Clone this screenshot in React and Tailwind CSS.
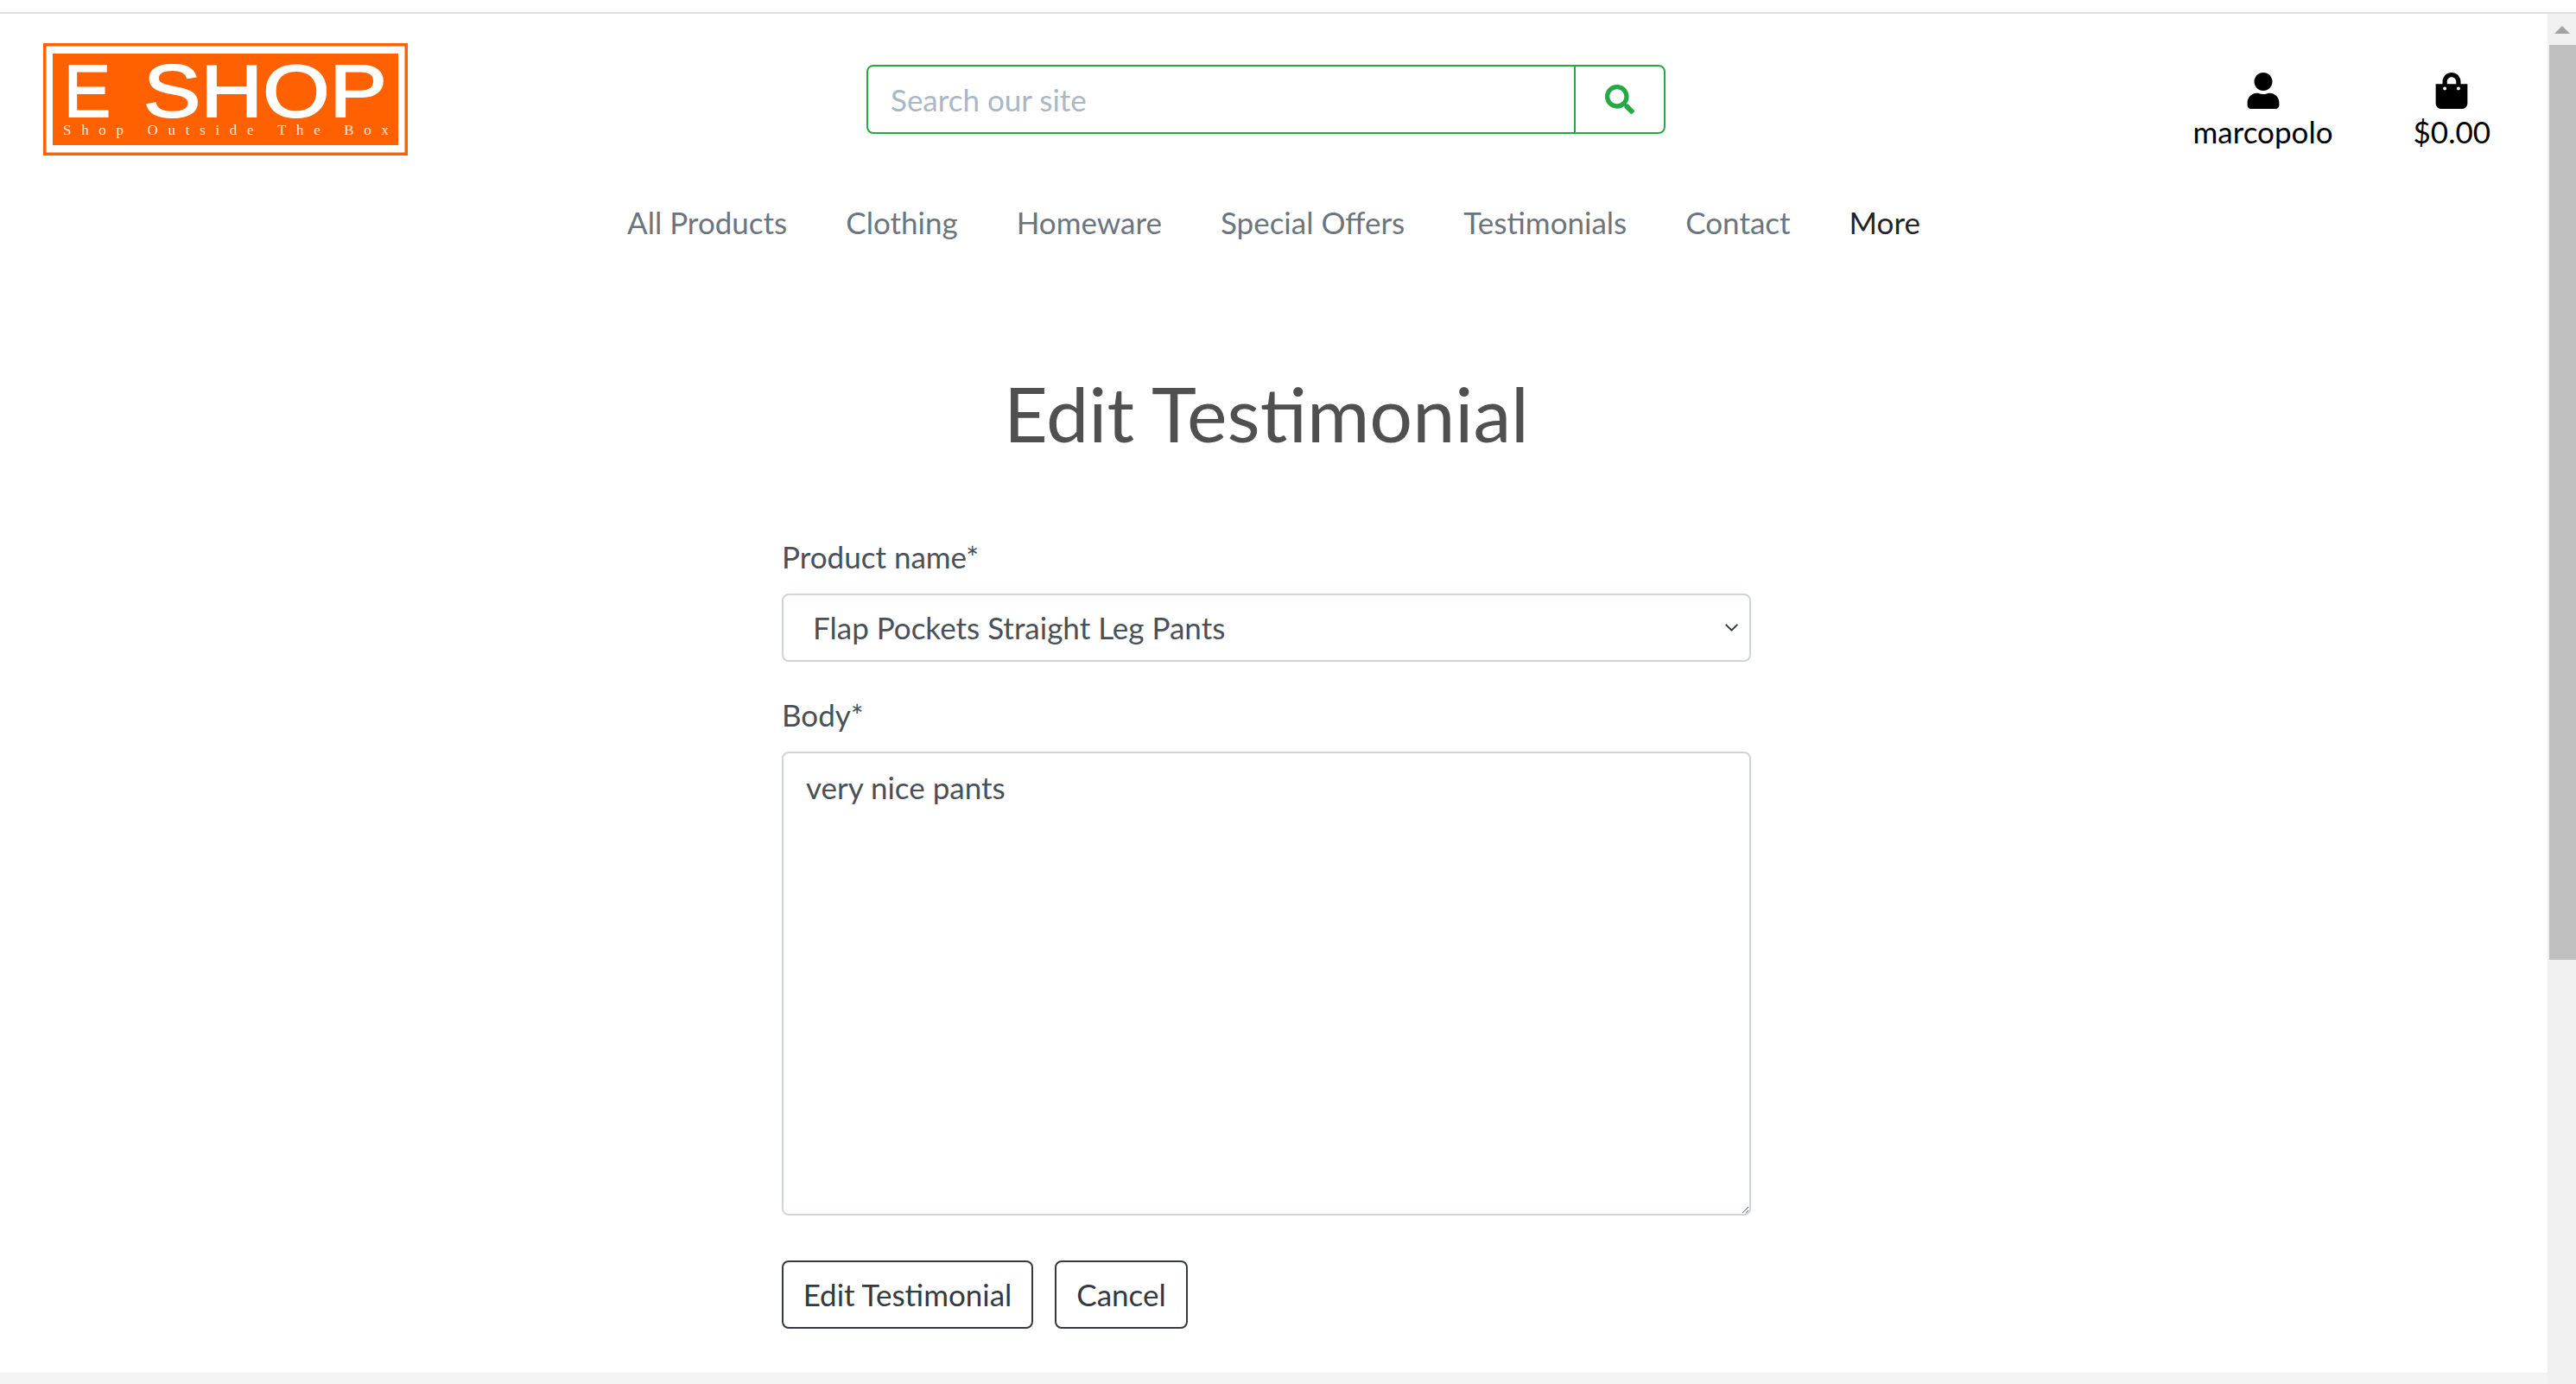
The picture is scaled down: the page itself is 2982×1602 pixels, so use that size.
import { FaSearch, FaShoppingBag, FaUser } from 'react-icons/fa';
import { FiChevronDown } from 'react-icons/fi';

const navLinks = ['All Products', 'Clothing', 'Homeware', 'Special Offers', 'Testimonials', 'Contact'];

const Logo = () => (
  <svg width="422" height="130" viewBox="0 0 422 130" className="block shrink-0">
    <rect x="0" y="0" width="422" height="130" fill="#ff6000" />
    <rect x="3.5" y="3.5" width="415" height="123" fill="#ffffff" />
    <rect x="11" y="12" width="400" height="106" fill="#ff6000" />
    <g fill="#ffffff" stroke="#ffffff" strokeWidth="2" fontFamily="'Liberation Sans', sans-serif" fontSize="86">
      <text x="24" y="85" textLength="54" lengthAdjust="spacingAndGlyphs">E</text>
      <text x="116" y="85" textLength="282" lengthAdjust="spacingAndGlyphs">SHOP</text>
    </g>
    <text
      x="23"
      y="106"
      fill="#ffe6d6"
      fontFamily="'Liberation Serif', serif"
      fontSize="17"
      textLength="377"
    >
      Shop Outside The Box
    </text>
  </svg>
);

const Header = () => (
  <div className="flex items-start pt-[34px] pl-[50px]">
    <Logo />
    <form className="flex h-[80px] w-[925px] ml-[531px] mt-[25px] rounded-lg border-2 border-[#28a745]">
      <input
        className="flex-1 min-w-0 px-[26px] text-[35px] text-[#495057] placeholder:text-[#a9b7c6] outline-none bg-transparent"
        placeholder="Search our site"
      />
      <button type="button" className="flex w-[104px] items-center justify-center border-l-2 border-[#28a745] text-[#28a745]">
        <FaSearch size={34} />
      </button>
    </form>
    <div className="ml-auto mr-[66px] mt-[34px] flex gap-[93px] text-black text-[35px] leading-[42px]">
      <a className="flex flex-col items-center">
        <FaUser size={42} />
        <span className="mt-[5px]">marcopolo</span>
      </a>
      <a className="flex flex-col items-center">
        <FaShoppingBag size={42} />
        <span className="mt-[5px]">$0.00</span>
      </a>
    </div>
  </div>
);

const Nav = () => (
  <nav className="mt-[55px] flex justify-center gap-[68px] text-[35px] leading-[44px] text-[#6c757d]">
    {navLinks.map((link) => (
      <a key={link}>{link}</a>
    ))}
    <a className="text-[#212529]">More</a>
  </nav>
);

const EditForm = () => (
  <div className="flex flex-col items-center pr-[17px]">
    <h1 className="mt-[146px] text-[88px] leading-[106px] text-[#505050]">Edit Testimonial</h1>
    <form className="mt-[92px] w-[1122px] text-[35px] text-[#495057]">
      <label className="block leading-[42px]">Product name*</label>
      <div className="relative mt-[22px]">
        <select className="block h-[79px] w-full appearance-none rounded-lg border-2 border-[#ced4da] bg-white pl-[34px] text-[35px] outline-none">
          <option>Flap Pockets Straight Leg Pants</option>
        </select>
        <FiChevronDown size={25} className="pointer-events-none absolute right-[10px] top-[27px] text-[#343a40]" />
      </div>
      <label className="mt-[40px] block leading-[42px]">Body*</label>
      <textarea
        className="mt-[22px] block h-[537px] w-full rounded-lg border-2 border-[#ced4da] px-[26px] py-[18px] leading-[42px] outline-none"
        defaultValue="very nice pants"
      />
      <div className="mt-[52px] flex gap-[25px] text-[#343a40]">
        <button type="button" className="h-[79px] w-[291px] rounded-lg border-2 border-[#343a40]">Edit Testimonial</button>
        <button type="button" className="h-[79px] w-[154px] rounded-lg border-2 border-[#343a40]">Cancel</button>
      </div>
    </form>
  </div>
);

const Scrollbar = () => (
  <div className="flex w-[33px] shrink-0 flex-col bg-[#f0f0f0]">
    <div className="flex h-[36px] items-center justify-center">
      <div className="h-0 w-0 border-x-[9px] border-b-[9px] border-x-transparent border-b-[#a3a3a3]" />
    </div>
    <div className="ml-[2px] h-[1059px] bg-[#c0c0c0]" />
  </div>
);

const App = () => (
  <div className="flex h-[1602px] flex-col overflow-hidden bg-white" style={{ fontFamily: "Lato, sans-serif" }}>
    <div className="h-[14px] shrink-0" />
    <div className="h-[2px] shrink-0 bg-[#e0e0e0]" />
    <div className="flex min-h-0 flex-1">
      <div className="flex min-w-0 flex-1 flex-col">
        <main className="min-h-0 flex-1 overflow-hidden">
          <Header />
          <Nav />
          <EditForm />
        </main>
        <div className="h-[13px] shrink-0 bg-[#f4f4f4]" />
      </div>
      <Scrollbar />
    </div>
  </div>
);

export default App;
